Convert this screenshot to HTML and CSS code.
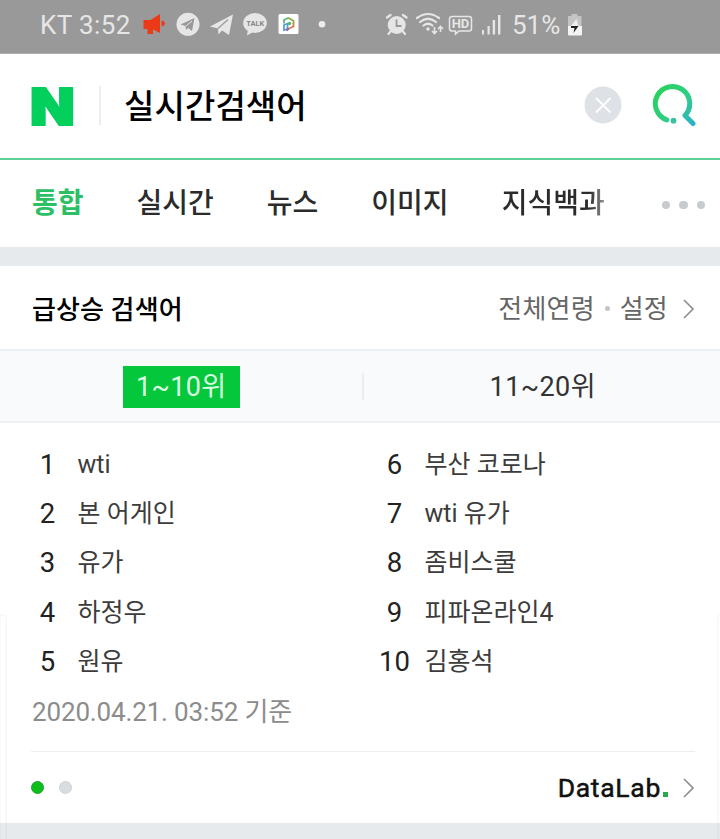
FILE: index.html
```html
<!DOCTYPE html>
<html lang="ko">
<head>
    <meta charset="UTF-8">
    <meta name="viewport" content="width=device-width, initial-scale=1.0">
    <title>실시간검색어</title>
    <link rel="stylesheet" href="styles.css">
</head>
<body>
    <div class="status-bar">
        <span class="clock">KT 3:52</span>
        <svg class="status-left" width="190" height="30" viewBox="140 10 190 30">
            <!-- megaphone -->
            <g fill="#ea3a17">
                <path d="M143.500 20h7l9.500-6v19l-7-3.500v4.500h-5.500v-5h-4z"/>
                <path d="M161.500 20.500q3.500 1 3.500 3t-3.500 3z"/>
            </g>
            <!-- telegram -->
            <circle cx="188" cy="24.300" r="11.500" fill="#e6e6e6"/>
            <path d="M180.500 24.500l14-6.500-2.500 13-4-3-2 2-.5-4z" fill="#999"/>
            <path d="M186 26l6-5" stroke="#e6e6e6" stroke-width="1"/>
            <path d="M210 26.500l23-12-4 20.500-7-4.500-3.500 4-.5-6z" fill="#e6e6e6"/>
            <path d="M218 28.500l10-9" stroke="#999" stroke-width="1.200"/>
            <!-- talk bubble -->
            <ellipse cx="255" cy="23" rx="11.800" ry="10" fill="#e6e6e6"/>
            <path d="M248 29l-1 6.500 7-4z" fill="#e6e6e6"/>
            <text class="talk-text" x="255.200" y="26" text-anchor="middle">TALK</text>
            <!-- app badge -->
            <rect x="278.500" y="14" width="20" height="20" rx="1.500" fill="#fff"/>
            <g fill="none" stroke-width="1.800">
                <path d="M284 23.500v-3.500l4.500-2.200" stroke="#5bb878"/>
                <path d="M288 17.800l5.500 3v3" stroke="#8dae45"/>
                <path d="M293.500 23v3.500l-4.500 2" stroke="#db784b"/>
                <path d="M284 30v-5l3.500-1.500v5.500z" stroke="#5b9fcc"/>
                <path d="M286.500 30.500l2.500-2" stroke="#9d5a97"/>
            </g>
            <circle cx="289.500" cy="23.500" r="1.800" fill="#5bb878"/>
            <circle cx="322" cy="24.300" r="3.300" fill="#ededed"/>
        </svg>
        <svg class="status-right" width="120" height="30" viewBox="384 10 120 30">
            <!-- alarm -->
            <g fill="none" stroke="#e6e6e6" stroke-linecap="round">
                <path d="M387 17.500l3.500-2.500M406.500 17.500l-3.500-2.500" stroke-width="2.400"/>
                <path d="M390.500 31.500l-2 2.500M403 31.500l2 2.500" stroke-width="2.200"/>
            </g>
            <circle cx="396.700" cy="25" r="9" fill="#e6e6e6"/>
            <path d="M396.500 19.500v6.500h5" fill="none" stroke="#999" stroke-width="1.800"/>
            <!-- wifi -->
            <g fill="none" stroke="#e6e6e6" stroke-width="2.200" stroke-linecap="round">
                <path d="M417 18q11-8 22 0"/>
                <path d="M420 22q8-6.500 16 0"/>
                <path d="M423.500 25.500q4.500-3.500 9 0"/>
            </g>
            <circle cx="428" cy="29" r="1.800" fill="#e6e6e6"/>
            <g fill="none" stroke="#e6e6e6" stroke-width="1.600">
                <path d="M434.500 27v6.500M432 31l2.500 2.500 2.500-2.500"/>
                <path d="M440.500 32v-5.500M438 29l2.500-2.500 2.500 2.500"/>
            </g>
            <!-- HD voice -->
            <path d="M452 16.500h17q2.500 0 2.500 2.500v9.500q0 2.500-2.500 2.500h-10l-3.500 3v-3H452q-2.500 0-2.500-2.500v-9.500q0-2.500 2.500-2.500z" fill="none" stroke="#e6e6e6" stroke-width="1.500"/>
            <text class="hd-text" x="460.500" y="28.300" text-anchor="middle">HD</text>
            <!-- signal -->
            <g fill="#e6e6e6">
                <rect x="482" y="30" width="2" height="4.500"/>
                <rect x="487.500" y="26" width="2.200" height="8.500"/>
                <rect x="492.700" y="20" width="2.400" height="14.500"/>
                <rect x="498" y="15" width="2.400" height="19.500"/>
            </g>
        </svg>
        <span class="percent">51%</span>
        <svg class="battery" width="16" height="24" viewBox="0 0 16 24">
            <path d="M4.500 1h6v2h4v10H1V3h3.500z" fill="#c4c4c4"/>
            <path d="M1 13h14v8.500q0 1-1 1H2q-1 0-1-1z" fill="#f4f4f4"/>
            <path d="M9.500 6L4 13h7.500z" fill="#eee"/>
            <path d="M4 13h7.500l-5 7 1-5H4z" fill="#222"/>
        </svg>
    </div>

    <div class="search-bar">
        <div class="logo"><span>N</span></div>
        <span class="search-text">실시간검색어</span>
        <svg class="clear" width="38" height="38" viewBox="0 0 38 38">
            <circle cx="19" cy="19" r="18.500" fill="#dee1e5"/>
            <path d="M12 12l14.500 14.500M26.500 12L12 26.500" stroke="#fff" stroke-width="1.800"/>
        </svg>
        <svg class="search-icon" width="46" height="46" viewBox="0 0 46 46">
            <defs>
                <linearGradient id="searchColor" gradientUnits="userSpaceOnUse" x1="8" y1="10" x2="43" y2="42">
                    <stop offset="0" stop-color="#29d161"/>
                    <stop offset="0.500" stop-color="#2fcd86"/>
                    <stop offset="1" stop-color="#2cb1cb"/>
                </linearGradient>
            </defs>
            <path d="M15.800 37.900A17.200 17.200 0 1 1 34 33.500l8 8" fill="none" stroke="url(#searchColor)" stroke-width="5" stroke-linecap="round" stroke-linejoin="round"/>
            <circle cx="22.500" cy="38.700" r="2.900" fill="#3ac2a0"/>
        </svg>
    </div>

    <div class="tabs">
        <span class="tab active">통합</span>
        <span class="tab">실시간</span>
        <span class="tab">뉴스</span>
        <span class="tab">이미지</span>
        <span class="tab tab-fade">지식백과</span>
        <div class="more"><i></i><i></i><i></i></div>
    </div>

    <div class="card">
        <div class="card-head">
            <h2>급상승 검색어</h2>
            <div class="options">
                <span>전체연령</span>
                <i class="dot"></i>
                <span>설정</span>
                <svg class="arrow" width="12" height="20" viewBox="0 0 12 20">
                    <path d="M1 1l9 9-9 9" fill="none" stroke="#8f8f8f" stroke-width="1.700"/>
                </svg>
            </div>
        </div>

        <div class="rank-tabs">
            <div class="rank-tab"><span class="selected">1~10위</span></div>
            <div class="rank-tab"><span>11~20위</span></div>
        </div>

        <div class="rank-lists">
            <ol class="rank-list">
                <li><b>1</b><span>wti</span></li>
                <li><b>2</b><span>본 어게인</span></li>
                <li><b>3</b><span>유가</span></li>
                <li><b>4</b><span>하정우</span></li>
                <li><b>5</b><span>원유</span></li>
            </ol>
            <ol class="rank-list">
                <li><b>6</b><span>부산 코로나</span></li>
                <li><b>7</b><span>wti 유가</span></li>
                <li><b>8</b><span>좀비스쿨</span></li>
                <li><b>9</b><span>피파온라인4</span></li>
                <li><b>10</b><span>김홍석</span></li>
            </ol>
        </div>
        <p class="date">2020.04.21. 03:52 기준</p>

        <div class="card-foot">
            <div class="pages"><i class="on"></i><i></i></div>
            <div class="datalab">
                <span class="datalab-name">DataLab</span><i class="datalab-dot"></i>
                <svg class="arrow" width="12" height="20" viewBox="0 0 12 20">
                    <path d="M1 1l9 9-9 9" fill="none" stroke="#8f8f8f" stroke-width="1.700"/>
                </svg>
            </div>
        </div>
    </div>
    <div class="edge edge-left"></div>
    <div class="edge edge-right"></div>
</body>
</html>
```
FILE: styles.css
```css
* {
    box-sizing: border-box;
}
body {
    margin: 0;
    width: 720px;
    height: 839px;
    overflow: hidden;
    position: relative;
    background: #e6eaed;
    font-family: Roboto, "Noto Sans CJK KR", sans-serif;
    color: #333;
}
svg {
    display: block;
    flex: none;
}
span {
    white-space: nowrap;
}
i {
    display: block;
    flex: none;
    border-radius: 50%;
}

/* status bar */
.status-bar {
    display: flex;
    align-items: center;
    height: 54px;
    padding: 0 0 4px 40px;
    background: #999;
    border-bottom: 1px solid #b0b0b0;
    color: #e6e6e6;
    font-size: 26px;
}
.clock {
    width: 100px;
    padding-top: 1px;
    letter-spacing: 0.4px;
}
.status-right {
    margin-left: 54px;
}
.percent {
    width: 54px;
    margin-left: 8px;
    padding-top: 1px;
}
.battery {
    margin-left: 1px;
}
.talk-text {
    font: bold 7.500px Roboto, sans-serif;
    fill: #888;
}
.hd-text {
    font: bold 13px Roboto, sans-serif;
    fill: #e6e6e6;
}

/* search bar */
.search-bar {
    display: flex;
    align-items: center;
    height: 106px;
    padding: 0 23px 2px 30px;
    background: #fff;
    border-bottom: 2px solid #5fcf98;
}
.logo {
    width: 71px;
    height: 39px;
    border-right: 2px solid #eaeef0;
}
.logo span {
    display: block;
    width: 44px;
    font: 900 51px/41px Inter, sans-serif;
    color: #03cf5d;
    -webkit-text-stroke: 2px #03cf5d;
    transform: scaleX(1.14);
    transform-origin: left;
}
.search-text {
    flex: 1;
    margin: 4px 0 0 23px;
    font-size: 33px;
    font-weight: 500;
    line-height: 40px;
    letter-spacing: 0.1px;
    color: #000;
}
.search-icon {
    margin-left: 29px;
}

/* category tabs */
.tabs {
    display: flex;
    align-items: center;
    height: 87px;
    padding: 0 15px 0 32px;
    background: #fff;
    font-size: 28px;
    font-weight: 500;
    line-height: 40px;
}
.tab {
    margin-right: 53px;
    color: #2b2b2b;
}
.tab.active {
    color: #2dbf63;
    font-weight: 700;
}
.tab-fade {
    margin-right: 0;
    background: linear-gradient(90deg, #2b2b2b 85%, #999 100%);
    -webkit-background-clip: text;
    background-clip: text;
    color: transparent;
}
.more {
    display: flex;
    gap: 9px;
    margin-left: auto;
    padding-top: 3px;
}
.more i {
    width: 8.500px;
    height: 8.500px;
    background: #c8cbcd;
}

/* trending card */
.card {
    margin-top: 19px;
    height: 557px;
    background: #fff;
}
.card-head {
    display: flex;
    align-items: center;
    justify-content: space-between;
    height: 83px;
    padding: 2px 25px 0 32px;
    font-size: 26px;
    line-height: 40px;
}
.card-head h2 {
    margin: 2px 0 0;
    font-size: 26px;
    font-weight: 500;
    letter-spacing: 0.1px;
    color: #000;
}
.options {
    display: flex;
    align-items: center;
    letter-spacing: 0.2px;
    color: #666;
}
.dot {
    width: 5px;
    height: 5px;
    margin: 0 10px;
    background: #c4c4c4;
}
.arrow {
    margin-left: 15px;
}
.rank-tabs {
    display: flex;
    height: 74px;
    background: #f8fafb;
    border-top: 2px solid #ecf0f2;
    border-bottom: 2px solid #ecf0f2;
    font-size: 27px;
    line-height: 42px;
    letter-spacing: 0.4px;
}
.rank-tab {
    flex: 1;
    display: flex;
    align-items: center;
    justify-content: center;
    padding-left: 2px;
}
.rank-tab + .rank-tab {
    padding-left: 1px;
}
.rank-tab + .rank-tab::before {
    content: "";
    width: 2px;
    height: 27px;
    margin-right: auto;
    background: #eaeef0;
}
.rank-tab + .rank-tab span {
    margin: 1px auto 0 2px;
}
.rank-tab .selected {
    width: 117px;
    height: 42px;
    margin-top: 1px;
    text-align: center;
    background: #04c73c;
    color: #dcffe3;
}
.rank-lists {
    display: flex;
    padding-top: 17px;
}
.rank-list {
    width: 347px;
    margin: 0;
    padding: 0 0 0 31.500px;
    list-style: none;
}
.rank-list li {
    display: flex;
    align-items: center;
    height: 49.300px;
    font-size: 25px;
    line-height: 40px;
    color: #3c3c3c;
}
.rank-list b {
    width: 32px;
    margin-right: 14px;
    font-size: 27.500px;
    font-weight: 400;
    text-align: center;
    color: #222;
}
.date {
    height: 66px;
    margin: 0 25px 0 31px;
    padding: 6px 0 0 1px;
    border-bottom: 1px solid #eaeeee;
    font-size: 26px;
    line-height: 40px;
    letter-spacing: -0.15px;
    color: #8c8c8c;
}
.card-foot {
    display: flex;
    align-items: center;
    justify-content: space-between;
    height: 71px;
    margin: 0 25px 0 31px;
}
.pages {
    display: flex;
    gap: 15px;
}
.pages i {
    width: 13px;
    height: 13px;
    background: #d9dde1;
    border: 1px solid #cfd3d7;
}
.pages .on {
    background: #0cbd1c;
    border-color: #1ba52a;
}
.datalab {
    display: flex;
    align-items: center;
    color: #111;
}
.datalab-name {
    font-size: 26.500px;
    line-height: 40px;
    letter-spacing: 0.7px;
    -webkit-text-stroke: 0.5px #111;
}
.datalab-dot {
    width: 5px;
    height: 5px;
    margin: 14px 0 0 2px;
    border-radius: 0;
    background: #28a850;
}

/* faint scroll handles over both edges */
.edge {
    position: absolute;
    top: 614px;
    bottom: 0;
    width: 8px;
    border: 2px solid rgba(0, 0, 0, 0.025);
    border-bottom: 0;
}
.edge-left {
    left: -1px;
    border-radius: 0 4px 0 0;
}
.edge-right {
    left: 717px;
    border-radius: 4px 0 0 0;
}
```
